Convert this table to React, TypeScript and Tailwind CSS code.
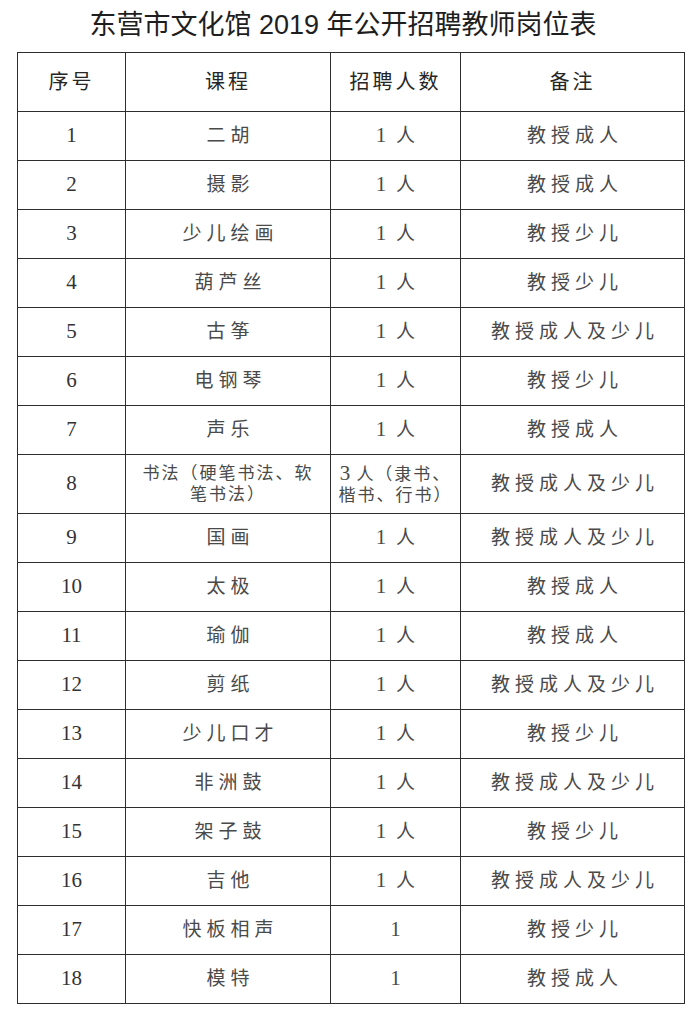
const rows: [string, string[], string[], string][] = [
  ['1', ['二胡'], ['1 人'], '教授成人'],
  ['2', ['摄影'], ['1 人'], '教授成人'],
  ['3', ['少儿绘画'], ['1 人'], '教授少儿'],
  ['4', ['葫芦丝'], ['1 人'], '教授少儿'],
  ['5', ['古筝'], ['1 人'], '教授成人及少儿'],
  ['6', ['电钢琴'], ['1 人'], '教授少儿'],
  ['7', ['声乐'], ['1 人'], '教授成人'],
  ['8', ['书法（硬笔书法、软', '笔书法）'], ['3 人（隶书、', '楷书、行书）'], '教授成人及少儿'],
  ['9', ['国画'], ['1 人'], '教授成人及少儿'],
  ['10', ['太极'], ['1 人'], '教授成人'],
  ['11', ['瑜伽'], ['1 人'], '教授成人'],
  ['12', ['剪纸'], ['1 人'], '教授成人及少儿'],
  ['13', ['少儿口才'], ['1 人'], '教授少儿'],
  ['14', ['非洲鼓'], ['1 人'], '教授成人及少儿'],
  ['15', ['架子鼓'], ['1 人'], '教授少儿'],
  ['16', ['吉他'], ['1 人'], '教授成人及少儿'],
  ['17', ['快板相声'], ['1'], '教授少儿'],
  ['18', ['模特'], ['1'], '教授成人'],
];

const cell = 'border-[1.5px] border-[#2e2e2e] text-center align-middle p-0';

// leading digit of a count is set a little larger, as in the scan
function Count({ text }: { text: string }) {
  const m = text.match(/^(\d)(.*)$/);
  if (!m) return <>{text}</>;
  return (
    <>
      <span className="text-[21px] tracking-normal">{m[1]}</span>
      {m[2]}
    </>
  );
}

export default function App() {
  return (
    <div className="w-[700px] h-[1012px] bg-white font-['Liberation_Serif','Noto_Sans_CJK_SC',serif] text-[#4a4a4a]">
      <h1 className="h-[52px] pt-[7px] pr-[14px] text-center text-[27px] leading-[36px] text-[#1e1e1e] font-['Liberation_Sans','Noto_Sans_CJK_SC',sans-serif]">
        东营市文化馆 2019 年公开招聘教师岗位表
      </h1>
      <table className="ml-[17px] w-[667px] table-fixed border-collapse">
        <colgroup>
          <col className="w-[108px]" />
          <col className="w-[205px]" />
          <col className="w-[130px]" />
          <col className="w-[224px]" />
        </colgroup>
        <thead>
          <tr className="h-[59px] text-[20px] text-[#262626] tracking-[3px]">
            <th className={`${cell} font-normal`}>序号</th>
            <th className={`${cell} font-normal`}>课程</th>
            <th className={`${cell} font-normal`}>招聘人数</th>
            <th className={`${cell} font-normal`}>备注</th>
          </tr>
        </thead>
        <tbody>
          {rows.map(([no, course, count, note]) => {
            const tall = course.length > 1;
            const txt = tall ? 'text-[17px] leading-[21px] tracking-[2px]' : 'text-[19px] tracking-[5px] pl-[5px]';
            const bare = count.length === 1 && count[0].length === 1;
            return (
              <tr key={no} className={tall ? 'h-[59px]' : 'h-[49px]'}>
                <td className={`${cell} text-[21px] text-[#333]`}>{no}</td>
                <td className={`${cell} ${txt}`}>
                  {course.map((l) => (
                    <div key={l}>{l}</div>
                  ))}
                </td>
                <td className={`${cell} ${bare ? 'text-[19px]' : txt}`}>
                  {count.map((l) => (
                    <div key={l}>
                      <Count text={l} />
                    </div>
                  ))}
                </td>
                <td className={`${cell} text-[19px] tracking-[5px] pl-[5px]`}>{note}</td>
              </tr>
            );
          })}
        </tbody>
      </table>
    </div>
  );
}
